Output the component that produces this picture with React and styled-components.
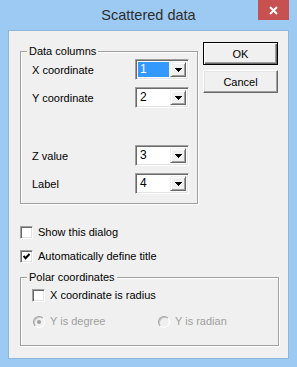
import React from 'react';
import styled, { createGlobalStyle, css } from 'styled-components';

const GlobalStyle = createGlobalStyle`
  html, body {
    margin: 0;
    padding: 0;
    background: #9dcaf3;
  }
  body {
    font-family: "Liberation Sans", Arial, sans-serif;
    font-size: 11px;
    color: #000;
  }
`;

const Window = styled.div`
  width: 297px;
  height: 367px;
  box-sizing: border-box;
  padding: 0 8px 8px;
  background: #9dcaf3;
  display: flex;
  flex-direction: column;
`;

const TitleBar = styled.div`
  height: 30px;
  flex: none;
  display: grid;
  grid-template-columns: 1fr auto 1fr;
`;

const Title = styled.div`
  grid-column: 2;
  align-self: center;
  font-size: 14.5px;
  line-height: 18px;
  color: #2e2e2e;
`;

const CloseButton = styled.div`
  grid-column: 3;
  justify-self: end;
  align-self: start;
  width: 31px;
  height: 20px;
  background: #c75050;
  display: flex;
  align-items: center;
  justify-content: center;
`;

const Client = styled.div`
  flex: 1;
  box-sizing: border-box;
  background: #f0f0f0;
  border: 1px solid #8db5dd;
  padding: 10px 0 0 11px;
  display: flex;
  flex-direction: column;
`;

const TopRow = styled.div`
  display: flex;
  align-items: flex-start;
`;

const GroupBox = styled.fieldset`
  margin: ${(p) => p.$top}px 0 0;
  padding: 0;
  min-width: 0;
  width: ${(p) => p.$width}px;
  box-sizing: border-box;
  border: 1px solid #a0a0a0;
  box-shadow: 1px 1px 0 #fff, inset 1px 1px 0 #fff;
`;

const Legend = styled.legend`
  margin-left: 6px;
  padding: 0 2px;
  line-height: 13px;
  background: #f0f0f0;
`;

const FieldRows = styled.div`
  display: flex;
  flex-direction: column;
  gap: 7px;
  padding: 1px 8px 9px 11px;
`;

const FieldRow = styled.div`
  height: 21px;
  display: flex;
  align-items: center;
  justify-content: space-between;
  margin-top: ${(p) => p.$extra || 0}px;
`;

const Combo = styled.div`
  width: 54px;
  height: 21px;
  box-sizing: border-box;
  padding: 1px;
  background: #fff;
  border: 1px solid;
  border-color: #a0a0a0 #fff #fff #a0a0a0;
  box-shadow: inset 1px 1px 0 #696969, inset -1px -1px 0 #e3e3e3;
  display: flex;
  gap: 1px;
`;

const ComboValue = styled.div`
  flex: 1;
  margin: 1px 0 1px 1px;
  padding-left: 2px;
  line-height: 15px;
  font-size: 12px;
  ${(p) =>
    p.$selected &&
    css`
      background: #3399ff;
      color: #fff;
    `}
`;

const DropButton = styled.div`
  width: 16px;
  margin: 1px 1px 1px 0;
  box-sizing: border-box;
  background: #f0f0f0;
  border: 1px solid;
  border-color: #f0f0f0 #696969 #696969 #f0f0f0;
  box-shadow: inset 1px 1px 0 #fff, inset -1px -1px 0 #a0a0a0;
  display: flex;
  align-items: center;
  justify-content: center;
`;

const ButtonColumn = styled.div`
  display: flex;
  flex-direction: column;
  gap: 5px;
  margin: 1px 0 0 5px;
`;

const PushButton = styled.button`
  width: 75px;
  height: 23px;
  padding: 0;
  font: inherit;
  color: #000;
  background: #f0f0f0;
  border: 1px solid;
  border-color: #fff #696969 #696969 #fff;
  box-shadow: inset -1px -1px 0 #a0a0a0, inset 1px 1px 0 #e3e3e3;
  ${(p) =>
    p.$default &&
    css`
      border-color: #000;
      box-shadow: inset 1px 1px 0 #fff, inset -1px -1px 0 #696969,
        inset -2px -2px 0 #a0a0a0;
    `}
`;

const Options = styled.div`
  display: flex;
  flex-direction: column;
  gap: 11px;
  margin-top: 22px;
`;

const CheckRow = styled.label`
  display: flex;
  align-items: center;
  gap: 5px;
  height: 13px;
  line-height: 13px;
`;

const CheckBox = styled.span`
  width: 13px;
  height: 13px;
  flex: none;
  box-sizing: border-box;
  background: #fff;
  border: 1px solid;
  border-color: #a0a0a0 #fff #fff #a0a0a0;
  box-shadow: inset 1px 1px 0 #696969, inset -1px -1px 0 #e3e3e3;
  display: flex;
  align-items: center;
  justify-content: center;
`;

const PolarRows = styled.div`
  display: flex;
  flex-direction: column;
  gap: 13px;
  padding: 5px 0 17px 11px;
`;

const RadioGrid = styled.div`
  display: grid;
  grid-template-columns: 125px auto;
  margin-left: 1px;
`;

const RadioRow = styled.label`
  display: flex;
  align-items: center;
  gap: 5px;
  height: 13px;
  line-height: 13px;
  color: #a0a0a0;
`;

const Radio = styled.span`
  width: 12px;
  height: 12px;
  flex: none;
  box-sizing: border-box;
  border-radius: 50%;
  background: #f0f0f0;
  border: 1px solid;
  border-color: #a0a0a0 #fff #fff #a0a0a0;
  box-shadow: inset 1px 1px 0 #c8c8c8;
  display: flex;
  align-items: center;
  justify-content: center;

  &::after {
    content: '';
    width: 4px;
    height: 4px;
    border-radius: 50%;
    background: ${(p) => (p.$checked ? '#a0a0a0' : 'transparent')};
  }
`;

const Arrow = () => (
  <svg width="7" height="4" viewBox="0 0 7 4" shapeRendering="crispEdges">
    <polygon points="0,0 7,0 3.5,4" fill="#000" />
  </svg>
);

const Check = () => (
  <svg width="7" height="7" viewBox="0 0 7 7">
    <polyline points="0.6,3 2.6,5.2 6.5,1" fill="none" stroke="#000" strokeWidth="2" />
  </svg>
);

const ComboBox = ({ value, selected }) => (
  <Combo>
    <ComboValue $selected={selected}>{value}</ComboValue>
    <DropButton>
      <Arrow />
    </DropButton>
  </Combo>
);

const columns = [
  { label: 'X coordinate', value: '1', selected: true },
  { label: 'Y coordinate', value: '2' },
  { label: 'Z value', value: '3', extra: 30 },
  { label: 'Label', value: '4' },
];

export default function App() {
  return (
    <>
      <GlobalStyle />
      <Window>
        <TitleBar>
          <Title>Scattered data</Title>
          <CloseButton>
            <svg width="9" height="9" viewBox="0 0 9 9">
              <path d="M1 1 L8 8 M8 1 L1 8" stroke="#fff" strokeWidth="2" />
            </svg>
          </CloseButton>
        </TitleBar>
        <Client>
          <TopRow>
            <GroupBox $top={4} $width={178}>
              <Legend>Data columns</Legend>
              <FieldRows>
                {columns.map((c) => (
                  <FieldRow key={c.label} $extra={c.extra}>
                    <span>{c.label}</span>
                    <ComboBox value={c.value} selected={c.selected} />
                  </FieldRow>
                ))}
              </FieldRows>
            </GroupBox>
            <ButtonColumn>
              <PushButton $default>OK</PushButton>
              <PushButton>Cancel</PushButton>
            </ButtonColumn>
          </TopRow>
          <Options>
            <CheckRow>
              <CheckBox />
              Show this dialog
            </CheckRow>
            <CheckRow>
              <CheckBox>
                <Check />
              </CheckBox>
              Automatically define title
            </CheckRow>
          </Options>
          <GroupBox $top={8} $width={259}>
            <Legend>Polar coordinates</Legend>
            <PolarRows>
              <CheckRow>
                <CheckBox />
                X coordinate is radius
              </CheckRow>
              <RadioGrid>
                <RadioRow>
                  <Radio $checked />
                  Y is degree
                </RadioRow>
                <RadioRow>
                  <Radio />
                  Y is radian
                </RadioRow>
              </RadioGrid>
            </PolarRows>
          </GroupBox>
        </Client>
      </Window>
    </>
  );
}
